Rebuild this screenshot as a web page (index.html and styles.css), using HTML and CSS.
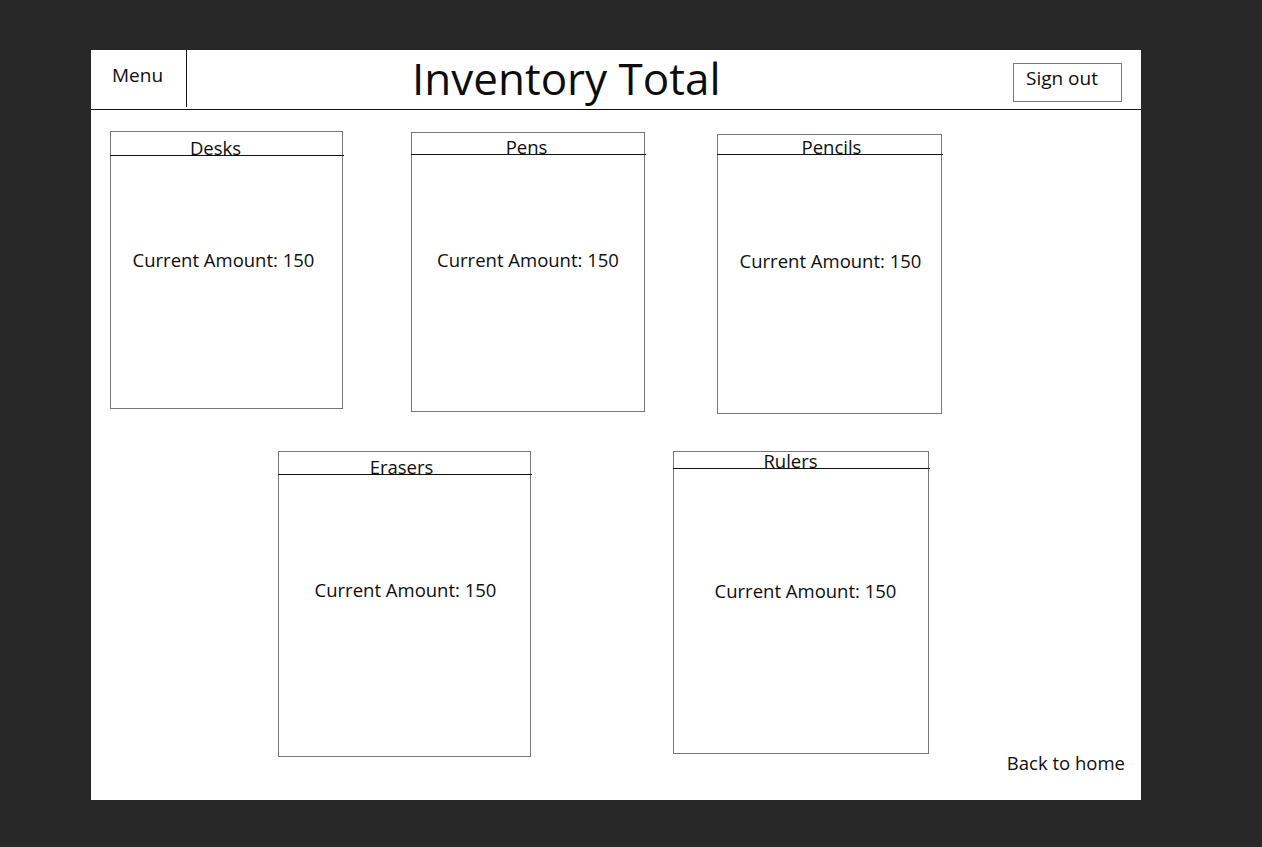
FILE: index.html
```html
<!DOCTYPE html>
<html lang="en">
<head>
<meta charset="utf-8">
<title>Inventory Total</title>
<link rel="stylesheet" href="styles.css">
</head>
<body>
<div class="canvas">
  <header class="topbar">
    <div class="menu">Menu</div>
    <h1 class="title">Inventory Total</h1>
    <div class="signout">Sign out</div>
  </header>
  <main class="board">
    <div class="row row-top">
      <section class="card card-desks">
        <div class="card-head"><span class="card-title">Desks</span></div>
        <p class="card-amount">Current Amount: 150</p>
      </section>
      <section class="card card-pens">
        <div class="card-head"><span class="card-title">Pens</span></div>
        <p class="card-amount">Current Amount: 150</p>
      </section>
      <section class="card card-pencils">
        <div class="card-head"><span class="card-title">Pencils</span></div>
        <p class="card-amount">Current Amount: 150</p>
      </section>
    </div>
    <div class="row row-bottom">
      <section class="card card-erasers">
        <div class="card-head"><span class="card-title">Erasers</span></div>
        <p class="card-amount">Current Amount: 150</p>
      </section>
      <section class="card card-rulers">
        <div class="card-head"><span class="card-title">Rulers</span></div>
        <p class="card-amount">Current Amount: 150</p>
      </section>
      <a class="back-home">Back to home</a>
    </div>
  </main>
</div>
</body>
</html>
```

FILE: styles.css
```css
* { box-sizing: border-box; }

html, body {
  margin: 0;
  padding: 0;
  background: #282828;
}

body {
  font-family: "Open Sans", "Noto Sans", "Liberation Sans", sans-serif;
  color: #0d0d0d;
  height: 847px;
  overflow: hidden;
}

.canvas {
  margin: 50px 0 0 91px;
  width: 1050px;
  height: 750px;
  background: #fff;
  display: flex;
  flex-direction: column;
}

/* ---------- top bar ---------- */
.topbar {
  display: flex;
  align-items: flex-start;
  height: 60px;
  border-bottom: 1px solid #111;
  flex: none;
}

.menu {
  width: 96px;
  height: 57px;
  border-right: 1px solid #111;
  padding: 16px 0 0 21px;
  font-size: 19px;
  line-height: 1;
}

.title {
  margin: 6px 0 0 225px;
  font-size: 44px;
  font-weight: 400;
  line-height: 1;
  letter-spacing: 0;
}

.signout {
  margin: 13px 19px 0 auto;
  width: 109px;
  height: 39px;
  border: 1px solid #777;
  padding: 5px 0 0 12px;
  font-size: 19px;
  line-height: 1;
}

/* ---------- cards ---------- */
.board {
  display: flex;
  flex-direction: column;
}

.row {
  display: flex;
  align-items: flex-start;
}

.row-top {
  padding-top: 21px;
  padding-left: 19px;
  height: 304px;
}

.row-bottom {
  margin-top: 37px;
  padding-left: 187px;
}

.card {
  border: 1px solid #777;
  display: flex;
  flex-direction: column;
  flex: none;
}

.card-head {
  height: calc(var(--head) + 1px);
  margin: 0 -2px 0 -1px;
  border-bottom: 1px solid #111;
  padding-top: calc(var(--head) - 16.4px);
  text-align: center;
  font-size: 18.5px;
  line-height: 1;
  white-space: nowrap;
}

.card-title {
  position: relative;
  left: var(--tshift);
}

.card-amount {
  margin: var(--amt) 0 0 0;
  text-align: center;
  font-size: 18.5px;
  line-height: 1;
  white-space: nowrap;
  position: relative;
  left: var(--ashift);
}

.card-desks {
  width: 233px; height: 278px;
  --head: 23px; --amt: 95px; --tshift: -11.5px; --ashift: -3px;
}

.card-pens {
  margin-left: 68px; margin-top: 1px;
  width: 234px; height: 280px;
  --head: 21px; --amt: 96px; --tshift: -2px; --ashift: 0px;
}

.card-pencils {
  margin-left: 72px; margin-top: 3px;
  width: 225px; height: 280px;
  --head: 19px; --amt: 97px; --tshift: 1.5px; --ashift: 1px;
}

.card-erasers {
  width: 253px; height: 306px;
  --head: 22px; --amt: 105.5px; --tshift: -3.5px; --ashift: 1px;
}

.card-rulers {
  margin-left: 142px;
  width: 256px; height: 303px;
  --head: 16px; --amt: 112.5px; --tshift: -11px; --ashift: 4.5px;
}

/* ---------- footer link ---------- */
.back-home {
  align-self: flex-end;
  margin: 0 16px -15px auto;
  font-size: 18.5px;
  line-height: 1;
  color: #0d0d0d;
  text-decoration: none;
  white-space: nowrap;
}
```
